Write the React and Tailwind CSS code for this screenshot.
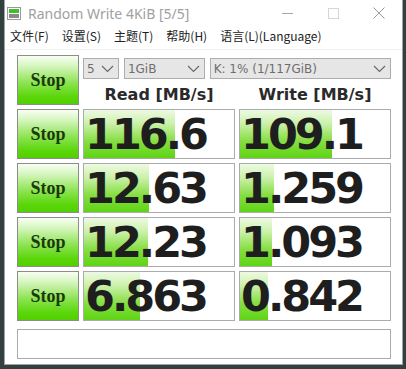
import React from 'react';

const rows = [
  { read: '116.6', readBar: 91, write: '109.1', writeBar: 92 },
  { read: '12.63', readBar: 65, write: '1.259', writeBar: 34 },
  { read: '12.23', readBar: 64, write: '1.093', writeBar: 32 },
  { read: '6.863', readBar: 56, write: '0.842', writeBar: 28 },
];

const menus = ['文件(F)', '设置(S)', '主题(T)', '帮助(H)', '语言(L)(Language)'];

const Chevron = () => (
  <svg width="13" height="8" viewBox="0 0 13 8" className="shrink-0">
    <path d="M1 1 L6.5 6.5 L12 1" fill="none" stroke="#6a6a6a" strokeWidth="1.2" />
  </svg>
);

const Select = ({ label, className }) => (
  <div className={`h-[21px] border border-[#adadad] bg-[#e6e6e6] flex items-center justify-between pl-[3px] pr-[4px] ${className}`}>
    <span className="font-['DejaVu_Sans',sans-serif] text-[12px] text-[#6e6e6e] leading-none">{label}</span>
    <Chevron />
  </div>
);

const StopButton = () => (
  <div className="w-[62px] h-[50px] border border-[#8c8c8c] bg-[linear-gradient(to_bottom,#f8fff4_0%,#d4f5bc_22%,#8ee454_55%,#5ad60a_85%,#52d000_100%)] flex items-center justify-center">
    <span className="font-['Liberation_Serif',serif] font-bold text-[18px] text-[#1a3a0a] leading-none">Stop</span>
  </div>
);

const Cell = ({ value, bar }) => (
  <div className="relative w-[152px] h-[50px] border border-[#ababab] bg-white overflow-hidden flex items-center">
    <div
      className="absolute left-0 top-0 bottom-0 bg-[linear-gradient(to_bottom,#eefae4_0%,#c9f0a6_30%,#86de42_65%,#5fd414_100%)]"
      style={{ width: bar }}
    />
    <span className="relative pl-[1px] font-['DejaVu_Sans',sans-serif] font-bold text-[43px] tracking-[-3px] text-[#1e1e1e] leading-none">
      {value}
    </span>
  </div>
);

export default function App() {
  return (
    <div className="w-[406px] h-[369px] bg-[#34403f] pl-[4px] pr-[3px] pb-[4px] overflow-hidden">
      <div className="w-[399px] h-[365px] bg-white border-x border-b border-[#9aa5a5] flex flex-col">
        {/* title bar */}
        <div className="h-[26px] flex items-center shrink-0">
          <div className="ml-[2px] w-[14px] h-[13px] flex flex-col gap-[1px] border border-[#9a9a9a] bg-white p-[1px]">
            <div className="h-[4px] bg-[#3fc02a]" />
            <div className="flex-1 bg-[#8a8a8a]" />
          </div>
          <span className="ml-[7px] font-['Noto_Sans',sans-serif] text-[14px] text-[#a0a0a0]">Random Write 4KiB [5/5]</span>
          <div className="ml-auto flex items-center">
            <div className="w-[46px] flex justify-center">
              <div className="w-[11px] h-px bg-[#a8a8a8]" />
            </div>
            <div className="w-[46px] flex justify-center">
              <div className="w-[11px] h-[11px] border border-[#d6d6d6]" />
            </div>
            <div className="w-[46px] flex justify-center">
              <svg width="12" height="12" viewBox="0 0 12 12">
                <path d="M0.5 0.5 L11.5 11.5 M11.5 0.5 L0.5 11.5" stroke="#9a9a9a" strokeWidth="1" />
              </svg>
            </div>
          </div>
        </div>
        {/* menu */}
        <div className="h-[23px] pb-[4px] flex items-center gap-[13px] pl-[5px] shrink-0 font-['Noto_Sans_CJK_SC',sans-serif] text-[12px] text-[#222]">
          {menus.map((m) => (
            <span key={m}>{m}</span>
          ))}
        </div>
        {/* body */}
        <div className="flex flex-col gap-[4px] pl-[12px] pt-[5px] border-t border-[#f0f0f0]">
          <div className="flex gap-[4px] h-[50px]">
            <StopButton />
            <div className="flex flex-col w-[308px]">
              <div className="flex gap-[5px] mt-[3px]">
                <Select label="5" className="w-[36px]" />
                <Select label="1GiB" className="w-[81px]" />
                <Select label="K: 1% (1/117GiB)" className="w-[182px]" />
              </div>
              <div className="flex gap-[4px] mt-[8px]">
                <div className="w-[152px] text-center font-['DejaVu_Sans',sans-serif] font-bold text-[16px] text-[#2a2a2a] leading-none">Read [MB/s]</div>
                <div className="w-[152px] text-center font-['DejaVu_Sans',sans-serif] font-bold text-[16px] text-[#2a2a2a] leading-none">Write [MB/s]</div>
              </div>
            </div>
          </div>
          {rows.map((r) => (
            <div key={r.read} className="flex gap-[4px]">
              <StopButton />
              <Cell value={r.read} bar={r.readBar} />
              <Cell value={r.write} bar={r.writeBar} />
            </div>
          ))}
          <div className="mt-[4px] w-[374px] h-[30px] border border-[#ababab] bg-white" />
        </div>
      </div>
    </div>
  );
}
